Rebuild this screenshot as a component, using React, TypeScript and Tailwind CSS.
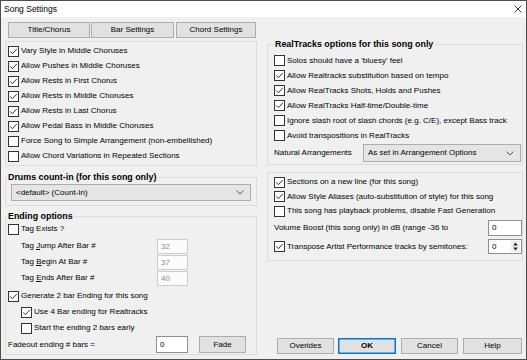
import React from "react";

const Check = ({ on }: { on?: boolean }) => (
  <svg width="11" height="11" viewBox="0 0 11 11" className="shrink-0">
    <rect x="0.5" y="0.5" width="10" height="10" fill="#fff" stroke="#333" />
    {on && <path d="M2.2 5.4 L4.4 7.7 L8.9 2.8" fill="none" stroke="#333" strokeWidth="1" />}
  </svg>
);

const Row = ({ on, label, className = "" }: { on?: boolean; label: React.ReactNode; className?: string }) => (
  <label className={`flex items-center gap-[2px] whitespace-nowrap ${className}`}>
    <Check on={on} />
    <span>{label}</span>
  </label>
);

const Btn = ({ children, className = "" }: { children: React.ReactNode; className?: string }) => (
  <button className={`flex items-center justify-center bg-[#e1e1e1] border border-[#adadad] text-[8px] leading-none ${className}`}>
    {children}
  </button>
);

const Select = ({ value, className = "" }: { value: string; className?: string }) => (
  <div className={`flex items-center justify-between bg-[#e5e5e5] border border-[#acacac] pl-[4px] pr-[6px] ${className}`}>
    <span>{value}</span>
    <svg width="8" height="5" viewBox="0 0 8 5">
      <path d="M0.5 0.5 L4 4 L7.5 0.5" fill="none" stroke="#555" />
    </svg>
  </div>
);

const Legend = ({ children, className = "" }: { children: React.ReactNode; className?: string }) => (
  <legend className={`px-[1px] text-[8.9px] font-bold leading-[10px] ${className}`}>{children}</legend>
);

const NumBox = ({ value, disabled, className = "" }: { value: string; disabled?: boolean; className?: string }) => (
  <input
    readOnly
    value={value}
    className={`px-[3px] border outline-none ${
      disabled ? "bg-[#fbfbfb] border-[#cccccc] text-[#8d8d8d]" : "bg-white border-[#8f8f8f] text-black"
    } ${className}`}
  />
);

export default function App() {
  return (
    <div className="w-[527px] h-[360px] flex flex-col border border-[#4d4d4d] bg-[#f0f0f0] text-black font-['Liberation_Sans',Arial,sans-serif] text-[8px] leading-none">
      <div className="h-[16px] shrink-0 bg-white flex items-center justify-between pl-[3px] pr-[4px]">
        <span className="text-[8.5px]">Song Settings</span>
        <svg width="8" height="8" viewBox="0 0 8 8">
          <path d="M0.5 0.5 L7.5 7.5 M7.5 0.5 L0.5 7.5" stroke="#222" strokeWidth="0.9" />
        </svg>
      </div>

      <div className="flex-1 flex pl-[4px] gap-[10px]">
        {/* left column */}
        <div className="w-[252px] flex flex-col">
          <div className="mt-[5px] h-[16px] flex pl-[3px]">
            <Btn className="w-[82px]">Title/Chorus</Btn>
            <Btn className="w-[83px] ml-[1px]">Bar Settings</Btn>
            <Btn className="w-[80px] ml-[2px]">Chord Settings</Btn>
          </div>

          <fieldset className="mt-[3px] h-[125px] border border-[#dcdcdc] pt-[1.5px] pl-[2px]">
            <div className="flex flex-col">
              <Row on label="Vary Style in Middle Choruses" className="h-[15px]" />
              <Row on label="Allow Pushes in Middle Choruses" className="h-[15px]" />
              <Row on label="Allow Rests in First Chorus" className="h-[15px]" />
              <Row on label="Allow Rests in Middle Choruses" className="h-[15px]" />
              <Row on label="Allow Rests in Last Chorus" className="h-[15px]" />
              <Row on label="Allow Pedal Bass in Middle Choruses" className="h-[15px]" />
              <Row label="Force Song to Simple Arrangement (non-embellished)" className="h-[15px]" />
              <Row label="Allow Chord Variations in Repeated Sections" className="h-[15px]" />
            </div>
          </fieldset>

          <fieldset className="mt-[6px] border border-[#dcdcdc] px-[5px] pb-[4px]">
            <Legend className="-ml-[4px]">Drums count-in (for this song only)</Legend>
            <Select value="<default> (Count-In)" className="mt-[2px] h-[17px]" />
          </fieldset>

          <fieldset className="mt-[5px] border border-[#dcdcdc] pb-[1px]">
            <Legend className="ml-[1px]">Ending options</Legend>
            <div className="flex flex-col">
              <Row label="Tag Exists ?" className="mt-[1px] h-[14px] pl-[2px]" />
              <div className="mt-[2px] h-[16px] flex items-center">
                <span className="w-[151px] pl-[15px]">
                  Tag <u>J</u>ump After Bar #
                </span>
                <NumBox disabled value="32" className="w-[31px] h-[15px]" />
              </div>
              <div className="h-[16px] flex items-center">
                <span className="w-[151px] pl-[15px]">
                  Tag <u>B</u>egin At Bar #
                </span>
                <NumBox disabled value="37" className="w-[31px] h-[15px]" />
              </div>
              <div className="h-[16px] flex items-center">
                <span className="w-[151px] pl-[15px]">
                  Tag <u>E</u>nds After Bar #
                </span>
                <NumBox disabled value="40" className="w-[31px] h-[15px]" />
              </div>
              <Row on label="Generate 2 bar Ending for this song" className="mt-[2px] h-[16px] pl-[2px]" />
              <Row on label="Use 4 Bar ending for Realtracks" className="h-[16px] pl-[15px]" />
              <Row label="Start the ending 2 bars early" className="h-[16px] pl-[15px]" />
              <div className="h-[17px] flex items-center">
                <span className="w-[150px] pl-[2px]">Fadeout ending # bars =</span>
                <NumBox value="0" className="w-[32px] h-[17px]" />
                <Btn className="ml-[11px] w-[47px] h-[17px]">Fade</Btn>
              </div>
            </div>
          </fieldset>
        </div>

        {/* right column */}
        <div className="w-[256px] flex flex-col">
          <fieldset className="mt-[22px] border border-[#dcdcdc] pb-[1px]">
            <Legend className="ml-[6px]">RealTracks options for this song only</Legend>
            <div className="mt-[4px] flex flex-col pl-[6px]">
              <Row label="Solos should have a 'bluesy' feel" className="h-[15px]" />
              <Row on label="Allow Realtracks substitution based on tempo" className="h-[15px]" />
              <Row on label="Allow RealTracks Shots, Holds and Pushes" className="h-[15px]" />
              <Row on label="Allow RealTracks Half-time/Double-time" className="h-[15px]" />
              <Row label="Ignore slash root of slash chords (e.g. C/E), except Bass track" className="h-[15px]" />
              <Row label="Avoid transpositions in RealTracks" className="h-[15px]" />
              <div className="h-[20px] flex items-center">
                <span className="w-[89px]">Natural Arrangements</span>
                <Select value="As set in Arrangement Options" className="w-[158px] h-[18px]" />
              </div>
            </div>
          </fieldset>

          <fieldset className="mt-[7px] border border-[#dcdcdc] pt-[2px] pb-[6px] pl-[6px]">
            <div className="flex flex-col">
              <Row on label="Sections on a new line (for this song)" className="h-[14.5px]" />
              <Row on label="Allow Style Aliases (auto-substitution of style) for this song" className="h-[14.5px]" />
              <Row label="This song has playback problems, disable Fast Generation" className="h-[14.5px]" />
              <div className="mt-[0.5px] h-[17px] flex items-center">
                <span>Volume Boost (this song only) in dB (range -36 to</span>
                <NumBox value="0" className="ml-auto w-[34px] h-[16px]" />
              </div>
              <div className="mt-[3px] h-[15px] flex items-center">
                <Row on label="Transpose Artist Performance tracks by semitones:" />
                <div className="ml-auto w-[34px] h-[15px] flex border border-[#8f8f8f] bg-white">
                  <span className="flex-1 flex items-center pl-[3px]">0</span>
                  <div className="w-[9px] my-[1px] mr-[1px] flex items-center justify-center bg-[#f0f0f0]">
                    <svg width="5" height="9" viewBox="0 0 5 9">
                      <path d="M2.5 0.5 L4.8 3.5 L0.2 3.5 Z M0.2 5.5 L4.8 5.5 L2.5 8.5 Z" fill="#222" />
                    </svg>
                  </div>
                </div>
              </div>
            </div>
          </fieldset>

          <div className="mt-auto mb-[5px] h-[16px] flex justify-end pr-[1px]">
            <Btn className="w-[57px]">Overides</Btn>
            <Btn className="w-[58px] ml-[4px] !border-[#0078d7] shadow-[inset_0_0_0_0.5px_#0078d7] font-bold">OK</Btn>
            <Btn className="w-[57px] ml-[5px]">Cancel</Btn>
            <Btn className="w-[59px] ml-[5px]">Help</Btn>
          </div>
        </div>
      </div>
    </div>
  );
}
